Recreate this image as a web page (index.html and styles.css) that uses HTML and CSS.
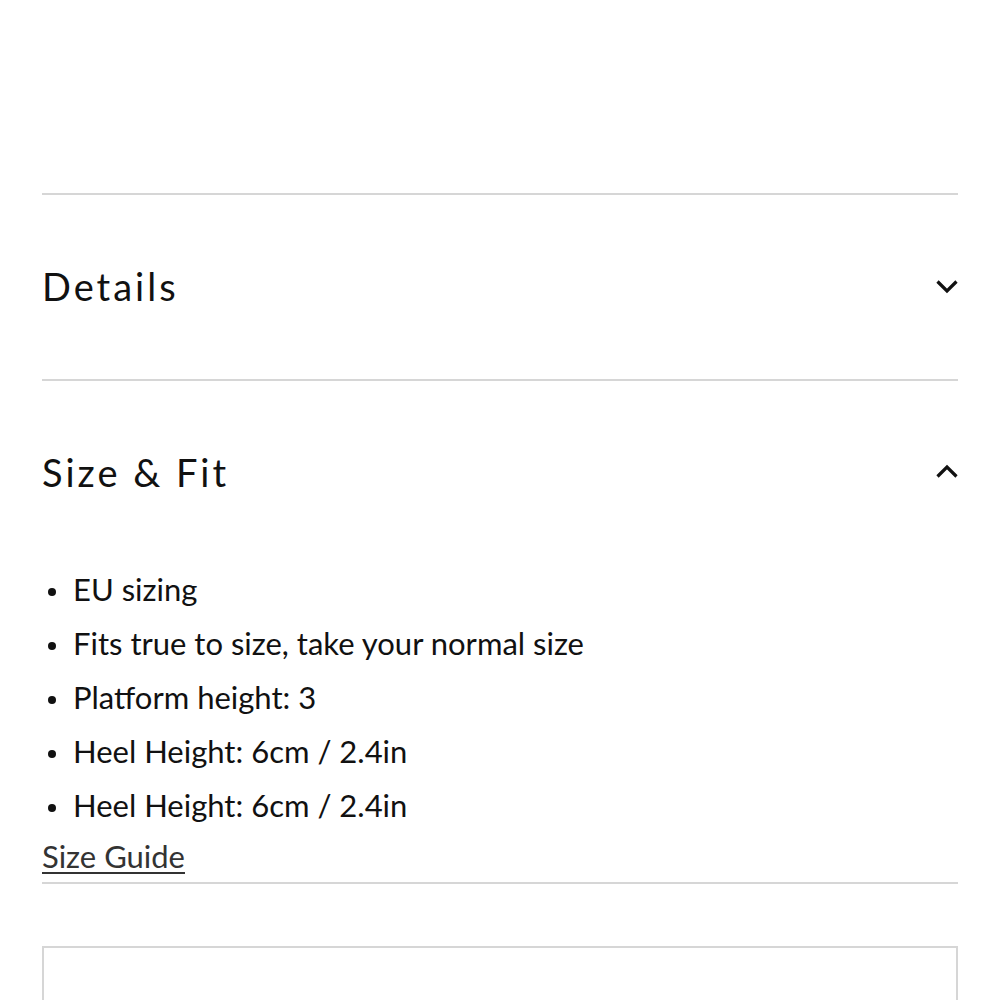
FILE: index.html
```html
<!DOCTYPE html>
<html lang="en">
<head>
<meta charset="utf-8">
<title>Product info</title>
<link rel="stylesheet" href="styles.css">
</head>
<body>
<div class="page">
  <div class="spacer"></div>
  <section class="acc">
    <div class="acc-head">
      <h2 class="acc-title">Details</h2>
      <svg class="chev" width="24" height="16" viewBox="0 0 24 16"><path d="M2.5 3.5 L12 13 L21.5 3.5" fill="none" stroke="#111" stroke-width="3.2"/></svg>
    </div>
  </section>
  <section class="acc open">
    <div class="acc-head">
      <h2 class="acc-title">Size &amp; Fit</h2>
      <svg class="chev" width="24" height="16" viewBox="0 0 24 16"><path d="M2.5 12.5 L12 3 L21.5 12.5" fill="none" stroke="#111" stroke-width="3.2"/></svg>
    </div>
    <div class="acc-body">
      <ul class="list">
        <li>EU sizing</li>
        <li>Fits true to size, take your normal size</li>
        <li>Platform height: 3</li>
        <li>Heel Height: 6cm / 2.4in</li>
        <li>Heel Height: 6cm / 2.4in</li>
      </ul>
      <a class="guide" href="#">Size Guide</a>
    </div>
  </section>
  <div class="box"></div>
</div>
</body>
</html>
```
FILE: styles.css
```css
html, body {
  margin: 0;
  padding: 0;
  background: #fff;
}
body {
  font-family: Lato, "Noto Sans", sans-serif;
  color: #111;
}
.page {
  padding: 0 42px;
}
.spacer {
  height: 193px;
}
.acc {
  border-top: 2px solid #d6d6d6;
}
.acc-head {
  height: 184px;
  box-sizing: border-box;
  padding-bottom: 3px;
  display: flex;
  align-items: center;
  justify-content: space-between;
}
.acc-title {
  margin: 0;
  font-weight: 400;
  font-size: 38px;
  letter-spacing: 3px;
  line-height: 1;
}
.chev {
  display: block;
  margin-right: -1px;
}
.acc-body {
  padding-bottom: 3px;
  border-bottom: 2px solid #d6d6d6;
}
.list {
  margin: 0;
  padding: 0;
  list-style: none;
}
.list li {
  height: 54px;
  box-sizing: border-box;
  padding-bottom: 6px;
  display: flex;
  align-items: center;
  font-size: 31px;
  position: relative;
  padding-left: 31px;
}
.list li::before {
  content: "";
  position: absolute;
  left: 6px;
  top: 50%;
  width: 8px;
  height: 8px;
  margin-top: -4px;
  border-radius: 50%;
  background: #111;
}
.guide {
  display: block;
  width: max-content;
  font-size: 31px;
  color: #333;
  line-height: 46px;
  margin-top: -2px;
  text-decoration: underline;
  text-decoration-thickness: 2px;
  text-underline-offset: 4px;
}
.box {
  margin-top: 62px;
  height: 100px;
  border: 2px solid #d6d6d6;
  border-bottom: none;
}
```
